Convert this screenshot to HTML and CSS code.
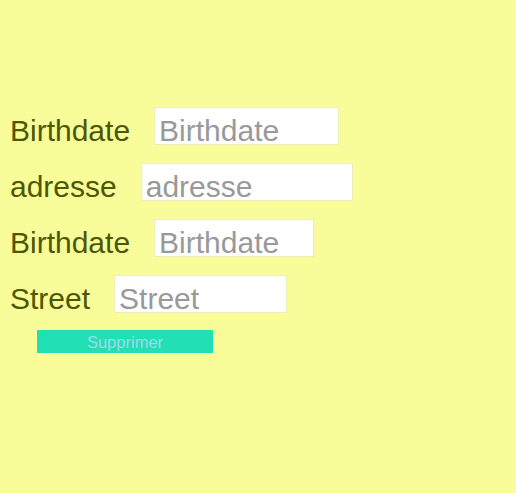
FILE: index.html
```html
<!DOCTYPE html>
<html>
<head>
<meta charset="utf-8">
<link rel="stylesheet" href="styles.css">
</head>
<body>
<div class="form">
  <div class="row"><label class="lbl">Birthdate</label><input class="field w1" placeholder="Birthdate"></div>
  <div class="row"><label class="lbl">adresse</label><input class="field w2" placeholder="adresse"></div>
  <div class="row"><label class="lbl">Birthdate</label><input class="field w3" placeholder="Birthdate"></div>
  <div class="row"><label class="lbl">Street</label><input class="field w4" placeholder="Street"></div>
  <button class="btn">Supprimer</button>
</div>
</body>
</html>
```
FILE: styles.css
```css
html, body {
  margin: 0;
  padding: 0;
  background: #f8fd9a;
  height: 100%;
}
.form {
  padding: 107px 0 0 10px;
  font-family: "Liberation Sans", Arial, sans-serif;
}
.row {
  display: flex;
  align-items: baseline;
  gap: 24px;
  height: 38px;
  margin-bottom: 18px;
}
.lbl {
  font-size: 30px;
  color: #4d5700;
}
.field {
  box-sizing: border-box;
  height: 38px;
  border: 1px solid #ebeeb8;
  background: #fff;
  font-family: "Liberation Sans", Arial, sans-serif;
  font-size: 30px;
  padding: 9px 5px 0 4px;
  margin: 0;
  outline: none;
}
.field::placeholder {
  color: #999;
}
.w1 { width: 185px; }
.w2 { width: 212px; }
.w3 { width: 160px; }
.w4 { width: 173px; }
.btn {
  display: block;
  margin: -1px 0 0 27px;
  width: 176px;
  height: 23px;
  border: none;
  background: #20e0b4;
  color: #9ddbea;
  font-family: "Liberation Sans", Arial, sans-serif;
  font-size: 16.5px;
  padding: 1px 0 0 0;
}
```
